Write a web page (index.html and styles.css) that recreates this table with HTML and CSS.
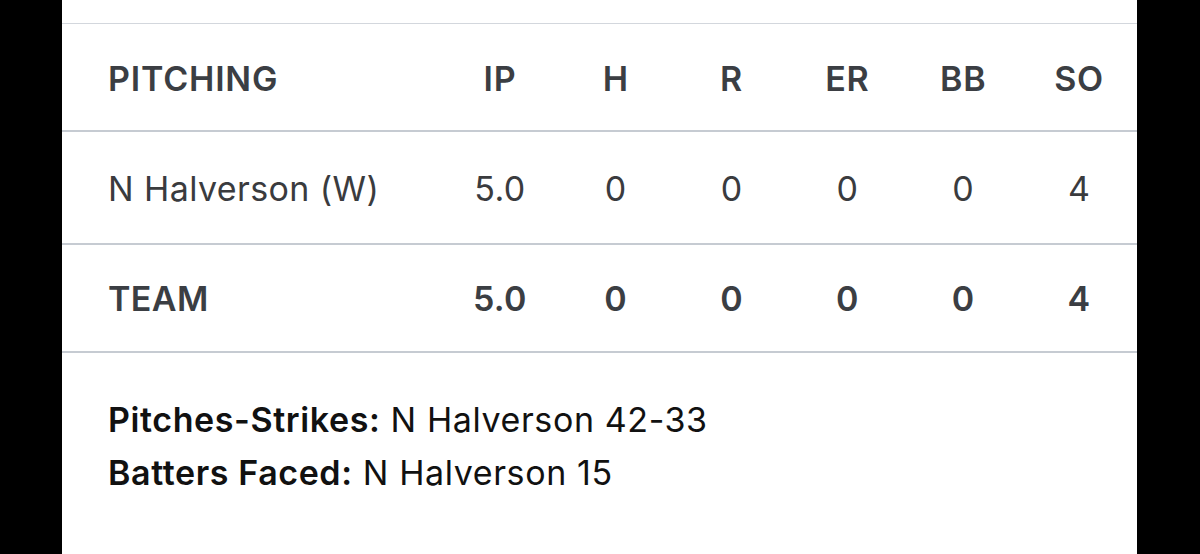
FILE: index.html
```html
<!DOCTYPE html>
<html>
<head>
<meta charset="utf-8">
<link rel="stylesheet" href="styles.css">
</head>
<body>
<div class="panel">
  <table class="box">
    <colgroup>
      <col class="c-name">
      <col><col><col><col><col><col>
    </colgroup>
    <thead>
      <tr>
        <th class="name">PITCHING</th>
        <th>IP</th><th>H</th><th>R</th><th>ER</th><th>BB</th><th>SO</th>
      </tr>
    </thead>
    <tbody>
      <tr class="player">
        <td class="name">N Halverson (W)</td>
        <td>5.0</td><td>0</td><td>0</td><td>0</td><td>0</td><td>4</td>
      </tr>
      <tr class="team">
        <td class="name">TEAM</td>
        <td>5.0</td><td>0</td><td>0</td><td>0</td><td>0</td><td>4</td>
      </tr>
    </tbody>
  </table>
  <div class="notes">
    <p><span class="label">Pitches-Strikes:</span> N Halverson 42-33</p>
    <p><span class="label">Batters Faced:</span> N Halverson 15</p>
  </div>
</div>
</body>
</html>
```
FILE: styles.css
```css
html, body {
  margin: 0;
  padding: 0;
  background: #000;
  height: 554px;
  overflow: hidden;
}
body {
  font-family: Inter, "Liberation Sans", Arial, sans-serif;
}
.panel {
  margin-left: 62px;
  width: 1075px;
  height: 554px;
  background: #fff;
  padding-top: 23px;
  box-sizing: border-box;
}
.box {
  width: 100%;
  border-collapse: collapse;
  table-layout: fixed;
  border-top: 1px solid #d3d7dd;
}
.c-name { width: 380px; }
th, td {
  text-align: center;
  padding: 0;
  border-bottom: 2px solid #c6cbd2;
}
th {
  height: 104px;
  padding-top: 2px;
  font-size: 34px;
  font-weight: 600;
  letter-spacing: 0.8px;
  color: #3b3e43;
}
.player td {
  height: 109px;
  padding-top: 2px;
  font-size: 34px;
  font-weight: 400;
  letter-spacing: 0.4px;
  color: #3a3b3e;
}
.team td {
  height: 106px;
  font-size: 34px;
  font-weight: 600;
  letter-spacing: 0.4px;
  color: #3b3e43;
}
.name {
  text-align: left;
  padding-left: 46px;
}
.notes {
  padding-top: 40px;
  font-size: 34px;
  color: #111;
}
.notes p {
  margin: 0 0 0 46px;
  line-height: 53px;
  letter-spacing: 0.6px;
}
.label {
  font-weight: 600;
}
```
